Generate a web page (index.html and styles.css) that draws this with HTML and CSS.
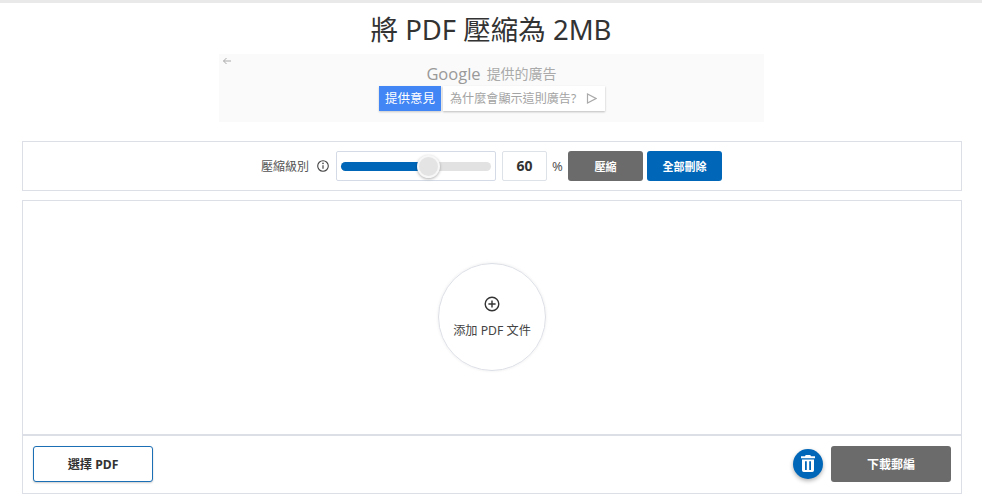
FILE: index.html
```html
<!DOCTYPE html>
<html lang="zh-Hant">
<head>
<meta charset="utf-8">
<title>將 PDF 壓縮為 2MB</title>
<link rel="stylesheet" href="styles.css">
</head>
<body>
<div class="topline"></div>
<h1 class="title">將 PDF 壓縮為 2MB</h1>
<div class="ad">
  <svg class="ad-back" width="10" height="10" viewBox="0 0 10 10"><path d="M9 5H1.500M4.500 2L1.500 5l3 3" fill="none" stroke="#aaa" stroke-width="1"/></svg>
  <div class="ad-head"><span class="ad-google">Google</span><span>提供的廣告</span></div>
  <div class="ad-actions">
    <span class="ad-feedback">提供意見</span>
    <span class="ad-why">為什麼會顯示這則廣告?
      <svg width="11" height="11" viewBox="0 0 11 11"><path d="M1.500 1v9L10 5.500z" fill="none" stroke="#aaa" stroke-width="1.200"/></svg>
    </span>
  </div>
</div>
<section class="controls">
  <span class="label">壓縮級別</span>
  <svg class="info" width="14" height="14" viewBox="0 0 14 14"><circle cx="7" cy="7" r="5.300" fill="none" stroke="#444" stroke-width="1.100"/><path d="M7 6.200v3.600" stroke="#444" stroke-width="1.200"/><circle cx="7" cy="4.400" r=".8" fill="#444"/></svg>
  <div class="slider-box">
    <div class="track"><div class="fill"></div><div class="thumb"></div></div>
  </div>
  <div class="value">60</div>
  <span class="pct">%</span>
  <button class="btn btn-gray btn-small">壓縮</button>
  <button class="btn btn-blue btn-small">全部刪除</button>
</section>
<section class="work">
  <div class="drop">
    <div class="circle">
      <svg width="16" height="16" viewBox="0 0 16 16"><circle cx="8" cy="8" r="6.800" fill="none" stroke="#333" stroke-width="1.400"/><path d="M8 4.400v7.200M4.400 8h7.200" stroke="#333" stroke-width="1.400"/></svg>
      <span class="circle-text">添加 PDF 文件</span>
    </div>
  </div>
  <div class="bar">
    <button class="btn-select">選擇 PDF</button>
    <div class="bar-right">
      <button class="trash" aria-label="刪除">
        <svg width="14" height="17" viewBox="0 0 14 17"><path fill="#fff" fill-rule="evenodd" d="M4.700 0h4.600l.7 1.300H14v2H0v-2h4zM1 4.400h12V15.300a1.700 1.700 0 0 1-1.700 1.700H2.700A1.700 1.700 0 0 1 1 15.300zM4 6.300v8.600h1.800V6.300zM8.200 6.300v8.600H10V6.300z"/></svg>
      </button>
      <button class="btn btn-gray btn-large">下載郵編</button>
    </div>
  </div>
</section>
</body>
</html>
```
FILE: styles.css
```css
* { box-sizing: border-box; }
html, body { margin: 0; padding: 0; background: #fff; }
body {
  height: 500px;
  overflow: hidden;
  font-family: "Noto Sans", "Noto Sans CJK TC", sans-serif;
  color: #333;
}
.topline { height: 3px; background: #e9e9e9; }
.title {
  margin: 9px 0 0;
  height: 42px;
  line-height: 35px;
  font-size: 27.500px;
  font-weight: 400;
  text-align: center;
  color: #333;
}
.ad {
  position: relative;
  width: 545px;
  height: 68px;
  margin: 0 auto 19px;
  margin-left: 219px;
  background: #fafafa;
  padding-top: 9px;
  display: flex;
  flex-direction: column;
  align-items: center;
}
.ad-back { position: absolute; left: 3px; top: 2px; }
.ad-head {
  display: flex;
  align-items: center;
  gap: 6px;
  height: 20px;
  font-size: 14px;
  color: #aaa;
}
.ad-google { font-family: "Open Sans", sans-serif; font-size: 16.500px; font-weight: 500; color: #999; }
.ad-actions { display: flex; gap: 2px; margin-top: 3px; margin-left: 1px; align-items: stretch; }
.ad-feedback {
  width: 62px; height: 25px;
  background: #4285f4;
  color: #fff;
  font-size: 12.500px;
  line-height: 25px;
  text-align: center;
  box-shadow: 0 1px 2px rgba(0,0,0,.2);
}
.ad-why {
  width: 162px; height: 25px;
  background: #fff;
  color: #a3a3a3;
  font-size: 12.100px;
  line-height: 25px;
  padding-left: 7px;
  display: flex;
  align-items: center;
  gap: 10px;
  box-shadow: 0 1px 2px rgba(0,0,0,.25);
}
.controls {
  margin: 0 20px 9px 22px;
  height: 50px;
  border: 1px solid #dcdfe6;
  display: flex;
  align-items: center;
  padding-left: 238px;
}
.label { font-size: 12px; color: #555; }
.info { margin-left: 7px; }
.slider-box {
  width: 160px; height: 30px;
  margin-left: 6px;
  border: 1px solid #d5dbe6;
  border-radius: 2px;
  padding: 0 4px;
  display: flex;
  align-items: center;
}
.track {
  position: relative;
  width: 150px; height: 9px;
  border-radius: 5px;
  background: #e2e2e2;
}
.fill { width: 78px; height: 9px; border-radius: 5px 0 0 5px; background: #0067b8; }
.thumb {
  position: absolute;
  left: 76px; top: -7px;
  width: 23px; height: 23px;
  border-radius: 50%;
  background: #e4e4e4;
  border: 2px solid #f7f7f7;
  box-shadow: 0 1px 3px rgba(0,0,0,.3);
}
.value {
  width: 45px; height: 30px;
  margin-left: 6px;
  border: 1px solid #dde1e8;
  border-radius: 2px;
  font-size: 14px;
  font-weight: 700;
  line-height: 28px;
  text-align: center;
}
.pct { margin-left: 5px; font-size: 13px; color: #555; width: 16px; }
.btn {
  border: 0;
  padding: 0;
  border-radius: 3px;
  color: #fff;
  font-family: inherit;
  font-weight: 700;
  display: block;
}
.btn-small { width: 75px; height: 30px; font-size: 11px; margin-left: 0; }
.btn-blue { margin-left: 4px; }
.btn-gray { background: #6b6b6b; }
.btn-blue { background: #0067b8; }
.work {
  margin: 0 20px 0 22px;
  height: 294px;
  border: 1px solid #dcdfe6;
  display: flex;
  flex-direction: column;
}
.drop {
  height: 235px;
  border-bottom: 2px solid #dcdfe6;
  padding-top: 62px;
  display: flex;
  justify-content: center;
}
.circle {
  width: 108px; height: 108px;
  border-radius: 50%;
  border: 1px solid #dcdfe6;
  box-shadow: 0 0 3px rgba(0,0,0,.08);
  display: flex;
  flex-direction: column;
  align-items: center;
  padding-top: 32px;
  gap: 10px;
}
.circle-text { font-size: 12.200px; color: #444; line-height: 17px; }
.bar {
  flex: 1;
  display: flex;
  align-items: center;
  justify-content: space-between;
  padding: 0 10px 2px;
}
.btn-select {
  width: 120px; height: 36px;
  background: #fff;
  border: 1px solid #1a6fb5;
  border-radius: 3px;
  box-shadow: 0 1px 2px rgba(0,0,0,.2);
  font-family: inherit;
  font-size: 12.200px;
  font-weight: 700;
  color: #333;
  padding: 0;
}
.bar-right { display: flex; align-items: center; gap: 8px; }
.trash {
  width: 30px; height: 30px;
  border: 0;
  padding: 0;
  border-radius: 50%;
  background: #0067b8;
  box-shadow: 0 2px 4px rgba(0,0,0,.3);
  display: flex;
  align-items: center;
  justify-content: center;
}
.btn-large { width: 120px; height: 36px; font-size: 12px; }
```
